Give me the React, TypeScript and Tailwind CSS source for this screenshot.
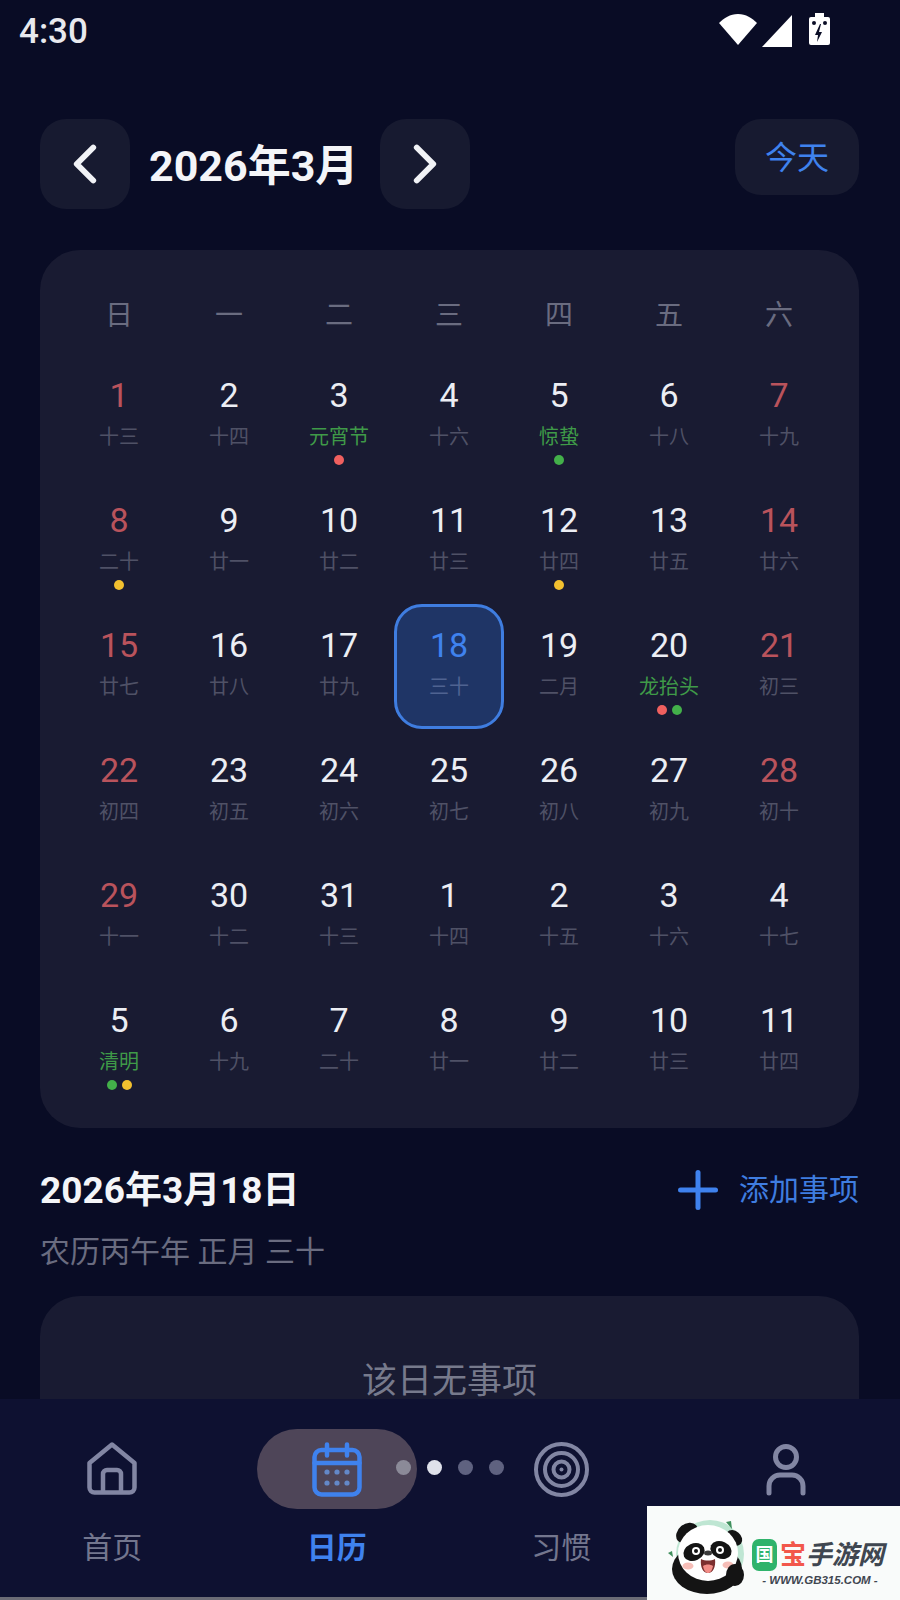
import { ChevronLeft, ChevronRight, Plus } from 'lucide-react';

// Data
type Day = {
  n: number;
  sub: string;
  red?: boolean;
  green?: boolean;
  selected?: boolean;
  dots?: string[];
};

const RED = 'bg-[#f0605f]';
const GREEN = 'bg-[#43b04a]';
const YELLOW = 'bg-[#f2c02f]';

const weekDays = ['日', '一', '二', '三', '四', '五', '六'];

const days: Day[] = [
  { n: 1, sub: '十三', red: true },
  { n: 2, sub: '十四' },
  { n: 3, sub: '元宵节', green: true, dots: [RED] },
  { n: 4, sub: '十六' },
  { n: 5, sub: '惊蛰', green: true, dots: [GREEN] },
  { n: 6, sub: '十八' },
  { n: 7, sub: '十九', red: true },
  { n: 8, sub: '二十', red: true, dots: [YELLOW] },
  { n: 9, sub: '廿一' },
  { n: 10, sub: '廿二' },
  { n: 11, sub: '廿三' },
  { n: 12, sub: '廿四', dots: [YELLOW] },
  { n: 13, sub: '廿五' },
  { n: 14, sub: '廿六', red: true },
  { n: 15, sub: '廿七', red: true },
  { n: 16, sub: '廿八' },
  { n: 17, sub: '廿九' },
  { n: 18, sub: '三十', selected: true },
  { n: 19, sub: '二月' },
  { n: 20, sub: '龙抬头', green: true, dots: [RED, GREEN] },
  { n: 21, sub: '初三', red: true },
  { n: 22, sub: '初四', red: true },
  { n: 23, sub: '初五' },
  { n: 24, sub: '初六' },
  { n: 25, sub: '初七' },
  { n: 26, sub: '初八' },
  { n: 27, sub: '初九' },
  { n: 28, sub: '初十', red: true },
  { n: 29, sub: '十一', red: true },
  { n: 30, sub: '十二' },
  { n: 31, sub: '十三' },
  { n: 1, sub: '十四' },
  { n: 2, sub: '十五' },
  { n: 3, sub: '十六' },
  { n: 4, sub: '十七' },
  { n: 5, sub: '清明', green: true, dots: [GREEN, YELLOW] },
  { n: 6, sub: '十九' },
  { n: 7, sub: '二十' },
  { n: 8, sub: '廿一' },
  { n: 9, sub: '廿二' },
  { n: 10, sub: '廿三' },
  { n: 11, sub: '廿四' },
];

// == Status bar icons
const StatusIcons = () => (
  <svg width="111" height="34" viewBox="0 0 111 34" fill="#fff">
    <path d="M19 1C11 1 5 5 0 10l19 22 19-22C33 5 27 1 19 1z" />
    <path d="M73 2v32H43z" />
    <path d="M96 0h9v4h4a2 2 0 0 1 2 2v24a2 2 0 0 1-2 2H92a2 2 0 0 1-2-2V6a2 2 0 0 1 2-2h4z" />
    <g fill="#0a0d26">
      <path d="M101 11l-5 11h3l-1 7 5-10h-3l2-8z" />
      <circle cx="95" cy="10" r="2" />
      <circle cx="106" cy="10" r="2" />
    </g>
  </svg>
);

// == Nav icons
const HomeIcon = () => (
  <svg width="50" height="53" viewBox="0 0 50 53" fill="none" stroke="#8286a3" strokeWidth="4.5" strokeLinejoin="round">
    <path d="M2.5 21 25 2.5 47.5 21v24.5a5 5 0 0 1-5 5h-35a5 5 0 0 1-5-5z" />
    <path d="M16 50V32a4 4 0 0 1 4-4h10a4 4 0 0 1 4 4v18" />
  </svg>
);

const CalendarIcon = () => (
  <svg width="50" height="55" viewBox="0 0 50 55" fill="none" stroke="#3f82ee" strokeWidth="4.5" strokeLinecap="round">
    <rect x="2.5" y="8" width="45" height="44.5" rx="7" />
    <path d="M2.5 21h45M15 2.5v11M35 2.5v11" />
    <g fill="#6388c9" stroke="none">
      <circle cx="15" cy="30" r="2.6" />
      <circle cx="25" cy="30" r="2.6" />
      <circle cx="35" cy="30" r="2.6" />
      <circle cx="15" cy="41" r="2.6" />
      <circle cx="25" cy="41" r="2.6" />
      <circle cx="35" cy="41" r="2.6" />
    </g>
  </svg>
);

const TargetIcon = () => (
  <svg width="55" height="55" viewBox="0 0 55 55" fill="none" stroke="#8286a3" strokeWidth="4">
    <circle cx="27.5" cy="27.5" r="25.5" />
    <circle cx="27.5" cy="27.5" r="16.5" />
    <circle cx="27.5" cy="27.5" r="8" />
    <circle cx="27.5" cy="27.5" r="2" fill="#8286a3" stroke="none" />
  </svg>
);

const UserIcon = () => (
  <svg width="40" height="53" viewBox="0 0 40 53" fill="none" stroke="#8286a3" strokeWidth="5" strokeLinecap="round">
    <circle cx="20" cy="13" r="10.5" />
    <path d="M3 49v-7a11 11 0 0 1 11-11h12a11 11 0 0 1 11 11v7" />
  </svg>
);

// == Watermark panda
const Panda = () => (
  <svg width="92" height="90" viewBox="0 0 92 90" className="shrink-0">
    <circle cx="50" cy="44" r="34" fill="#bfe6d3" />
    <ellipse cx="47" cy="59" rx="35" ry="25" fill="#141414" />
    <ellipse cx="27" cy="23" rx="12" ry="9" fill="#141414" transform="rotate(-40 27 23)" />
    <ellipse cx="74" cy="28" rx="9" ry="7" fill="#141414" transform="rotate(40 74 28)" />
    <ellipse cx="48" cy="43" rx="30" ry="28" fill="#fff" />
    <ellipse cx="34" cy="42" rx="11" ry="8.5" fill="#141414" transform="rotate(-25 34 42)" />
    <ellipse cx="61" cy="40" rx="11" ry="8.5" fill="#141414" transform="rotate(25 61 40)" />
    <circle cx="36" cy="41" r="4" fill="#fff" />
    <circle cx="60" cy="40" r="4" fill="#fff" />
    <circle cx="36" cy="41" r="2" fill="#141414" />
    <circle cx="60" cy="40" r="2" fill="#141414" />
    <ellipse cx="48" cy="43" rx="4" ry="2.5" fill="#3a3a3a" />
    <path d="M41 49c4 2 10 2 14 0 1 8-2 14-7 14s-8-6-7-14z" fill="#7c2f2f" />
    <path d="M43 56c3-2 7-2 10 0-1 5-3 7-5 7s-4-2-5-7z" fill="#f28c86" />
    <ellipse cx="28" cy="56" rx="5.5" ry="3.5" fill="#f6bdb7" />
    <ellipse cx="68" cy="55" rx="5.5" ry="3.5" fill="#f6bdb7" />
    <ellipse cx="75" cy="65" rx="9" ry="11" fill="#141414" />
    <path d="M66 12l6 7-1-8z" fill="#3f8f5c" />
    <path d="M8 43l5 4-1-6z" fill="#3f8f5c" />
  </svg>
);

// == Component =>
const App = () => {
  return (
    <div
      className="relative flex h-[1600px] w-[900px] flex-col overflow-hidden bg-[#090c25] text-white"
      style={{ fontFamily: 'Roboto, "Noto Sans CJK SC", sans-serif' }}
    >
      {/* Status bar */}
      <div className="flex h-[60px] shrink-0 items-center justify-between pr-[70px] pl-[19px]">
        <span className="pt-[2px] text-[35px] leading-none font-medium text-[#e8e9ee]">4:30</span>
        <StatusIcons />
      </div>

      {/* Scroll area */}
      <main className="flex min-h-0 flex-1 flex-col overflow-hidden pt-[59px] pr-[41px] pl-[40px]">
        <header className="flex items-start justify-between">
          <div className="flex items-center">
            <button className="flex h-[90px] w-[90px] items-center justify-center rounded-[26px] bg-[#171a30]">
              <ChevronLeft size={66} strokeWidth={2.1} color="#f1f2f6" />
            </button>
            <h1 className="mt-[4px] w-[250px] pl-[19px] text-[43px] leading-none font-bold text-[#f4f5f8]">2026年3月</h1>
            <button className="flex h-[90px] w-[90px] items-center justify-center rounded-[26px] bg-[#171a30]">
              <ChevronRight size={66} strokeWidth={2.1} color="#f1f2f6" />
            </button>
          </div>
          <button className="h-[76px] w-[124px] rounded-[26px] bg-[#171a30] pt-[2px] text-[32px] text-[#3f82ee]">今天</button>
        </header>

        <section className="mt-[41px] shrink-0 rounded-[40px] bg-[#191b32] pt-[23px] pr-[25px] pb-[24px] pl-[24px]">
          <div className="grid grid-cols-7">
            {weekDays.map((d) => (
              <div key={d} className="flex h-[81px] items-center justify-center pt-[4px] text-[28px] text-[#6a6c80]">
                {d}
              </div>
            ))}
            {days.map((d, i) => (
              <div
                key={i}
                className={`flex h-[125px] flex-col items-center rounded-[28px] border-[3px] pt-[18px] ${
                  d.selected ? 'border-[#3f7de0] bg-[#1f3566]' : 'border-transparent'
                }`}
              >
                <span
                  className={`h-[40px] text-[34px] leading-[40px] ${
                    d.selected ? 'text-[#3f82ee]' : d.red ? 'text-[#b9535c]' : 'text-[#eceef4]'
                  }`}
                >
                  {d.n}
                </span>
                <span
                  className={`mt-[9px] h-[26px] text-[20px] leading-[26px] ${
                    d.green ? 'text-[#3f9a48]' : d.selected ? 'text-[#4f6391]' : 'text-[#4f5166]'
                  }`}
                >
                  {d.sub}
                </span>
                {d.dots && (
                  <div className="mt-[5px] flex gap-[5px]">
                    {d.dots.map((c, j) => (
                      <span key={j} className={`h-[10px] w-[10px] rounded-full ${c}`} />
                    ))}
                  </div>
                )}
              </div>
            ))}
          </div>
        </section>

        <div className="mt-[38px] flex h-[48px] shrink-0 items-center justify-between">
          <h2 className="pt-[2px] text-[37px] leading-[48px] font-bold text-[#f4f5f8]">2026年3月18日</h2>
          <button className="flex items-center gap-[11px] text-[30px] leading-[48px] text-[#3f7de0]">
            <Plus size={60} strokeWidth={2} color="#3f82ee" />
            添加事项
          </button>
        </div>
        <p className="mt-[20px] shrink-0 text-[30px] leading-[36px] text-[#6a6c80]">农历丙午年 正月 三十</p>

        <section className="mt-[26px] h-[200px] shrink-0 rounded-[40px] bg-[#191b32] pt-[62px] text-center text-[35px] leading-[48px] text-[#777a8c]">
          该日无事项
        </section>
      </main>

      {/* Bottom nav */}
      <nav className="relative z-10 grid h-[201px] shrink-0 grid-cols-4 border-b-[3px] border-[#6b6c76] bg-[#0e1131] pr-[2px]">
        <div className="flex flex-col items-center pt-[43px]">
          <div className="h-[55px]">
            <HomeIcon />
          </div>
          <span className="mt-[33px] text-[30px] leading-[36px] text-[#73768e]">首页</span>
        </div>
        <div className="flex flex-col items-center pt-[43px]">
          <div className="relative flex h-[55px] items-start justify-center">
            <div className="absolute top-[-13px] h-[80px] w-[160px] rounded-[40px] bg-[#4e4558]" />
            <span className="relative flex">
              <CalendarIcon />
            </span>
          </div>
          <span className="mt-[33px] text-[30px] leading-[36px] font-bold text-[#3f82ee]">日历</span>
        </div>
        <div className="flex flex-col items-center pt-[43px]">
          <div className="h-[55px]">
            <TargetIcon />
          </div>
          <span className="mt-[33px] text-[30px] leading-[36px] text-[#73768e]">习惯</span>
        </div>
        <div className="flex flex-col items-center pt-[45px]">
          <UserIcon />
        </div>

        {/* Pager dots over the nav */}
        <div className="absolute top-[61px] left-[396px] flex gap-[16px]">
          <span className="h-[15px] w-[15px] rounded-full bg-[#8b8a98]" />
          <span className="h-[15px] w-[15px] rounded-full bg-[#dfe1ea]" />
          <span className="h-[15px] w-[15px] rounded-full bg-[#5f6280]" />
          <span className="h-[15px] w-[15px] rounded-full bg-[#5f6280]" />
        </div>
      </nav>

      {/* Watermark */}
      <div className="absolute right-0 bottom-0 z-20 flex h-[94px] w-[253px] items-end bg-[#f9fbfa] pl-[13px]">
        <Panda />
        <div className="mb-[13px] flex w-[136px] shrink-0 flex-col items-center">
          <div className="flex w-full items-center font-bold">
            <span className="flex h-[32px] w-[25px] items-center justify-center rounded-[7px] bg-[#2fb36b] text-[18px] leading-none text-white">
              国
            </span>
            <span className="ml-[3px] text-[26px] leading-[34px] text-[#f2574b]">宝</span>
            <span className="ml-0 text-[26px] leading-[34px] whitespace-nowrap text-[#3f4650] italic">手游网</span>
          </div>
          <span
            className="mt-[1px] text-[11.5px] leading-[14px] font-bold whitespace-nowrap text-[#3f4650] italic"
            style={{ fontFamily: '"Liberation Sans", sans-serif' }}
          >
            - WWW.GB315.COM -
          </span>
        </div>
      </div>
    </div>
  );
};

export default App;
